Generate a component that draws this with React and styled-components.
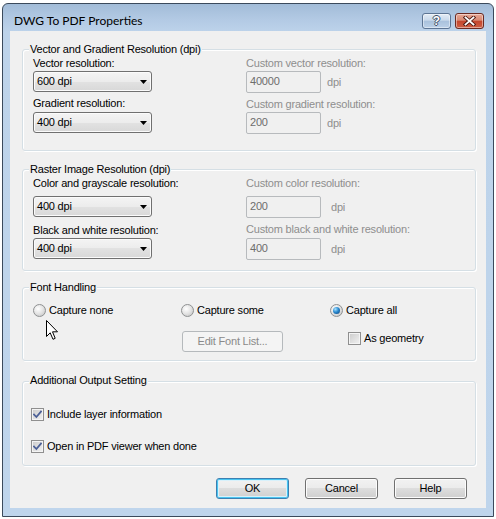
import React from "react";
import styled, { createGlobalStyle } from "styled-components";

const GlobalStyle = createGlobalStyle`
  html, body { margin: 0; padding: 0; background: #ffffff; }
  body {
    font-family: "Liberation Sans", Arial, sans-serif;
    font-size: 11px;
    color: #000;
  }
  #root { width: 496px; height: 519px; }
`;

const Screen = styled.div`
  position: relative;
  width: 496px;
  height: 519px;
  overflow: hidden;
  box-sizing: border-box;
  padding: 3px 2px 2px 2px;
  background: #ffffff;
`;

const Window = styled.div`
  box-sizing: border-box;
  width: 492px;
  height: 514px;
  display: flex;
  flex-direction: column;
  border: 1px solid #3b4a5c;
  border-radius: 6px 6px 0 0;
  padding: 0 7px 8px 7px;
  background: linear-gradient(
    to bottom,
    #a2bcd8 0px,
    #b3cae4 16px,
    #bdd3ea 28px,
    #bfd5ec 100%
  );
`;

const TitleBar = styled.div`
  height: 27px;
  flex: none;
  display: flex;
  align-items: flex-start;
  justify-content: space-between;
  padding: 9px 2px 0 4px;
  box-sizing: border-box;
`;

const Title = styled.div`
  font-family: "Segoe UI", Lato, "Noto Sans", sans-serif;
  font-size: 12px;
  line-height: 15px;
  color: #000;
`;

const CaptionButtons = styled.div`
  display: flex;
  gap: 4px;
`;

const CaptionButton = styled.div`
  width: 29px;
  height: 16px;
  box-sizing: border-box;
  border-radius: 3px;
  display: flex;
  align-items: center;
  justify-content: center;
  border: 1px solid ${(p) => (p.$close ? "#6b2a22" : "#5d7594")};
  background: ${(p) =>
    p.$close
      ? "linear-gradient(to bottom, #e7a795 0%, #d98a74 45%, #c4452c 50%, #cf5f45 100%)"
      : "linear-gradient(to bottom, #e3ecf6 0%, #c9d9eb 45%, #a9c1dc 50%, #bcd1e8 100%)"};
  box-shadow: inset 0 0 0 1px rgba(255, 255, 255, 0.45);
`;

const HelpGlyph = styled.span`
  font-family: "Liberation Sans", Arial, sans-serif;
  font-weight: bold;
  font-size: 12px;
  line-height: 12px;
  color: #ffffff;
  text-shadow: 1px 0 0 #3d4f66, -1px 0 0 #3d4f66, 0 1px 0 #3d4f66,
    0 -1px 0 #3d4f66;
`;

const Client = styled.div`
  flex: 1;
  background: #f0f0f0;
  display: flex;
  flex-direction: column;
  padding: 18px 10px 0 12px;
  box-sizing: border-box;
`;

const Group = styled.section`
  position: relative;
  box-sizing: border-box;
  height: ${(p) => p.$h}px;
  margin-top: ${(p) => p.$mt || 0}px;
  border: 1px solid #d5dfe5;
  border-radius: 3px;
  box-shadow: inset 1px 1px 0 #ffffff, 1px 1px 0 #ffffff;
  padding: ${(p) => p.$pad};
`;

const Legend = styled.h2`
  position: absolute;
  top: ${(p) => (p.$top != null ? p.$top : -7)}px;
  left: 6px;
  margin: 0;
  padding: 0 1px;
  background: #f0f0f0;
  font-size: 11px;
  line-height: 13px;
  font-weight: normal;
  letter-spacing: -0.2px;
  color: #000;
`;

const Columns = styled.div`
  display: flex;
`;

const Column = styled.div`
  display: flex;
  flex-direction: column;
  align-items: flex-start;
  width: ${(p) => (p.$w ? `${p.$w}px` : "auto")};
`;

const Label = styled.div`
  font-size: 11px;
  line-height: 13px;
  letter-spacing: -0.2px;
  white-space: nowrap;
  margin-top: ${(p) => p.$mt || 0}px;
  color: ${(p) => (p.$disabled ? "#8e8e8e" : "#000")};
`;

const Combo = styled.div`
  width: 119px;
  height: 21px;
  box-sizing: border-box;
  margin-top: ${(p) => p.$mt || 0}px;
  border: 1px solid #707070;
  border-radius: 3px;
  padding: 3px 4px 0 3px;
  display: flex;
  justify-content: space-between;
  background: linear-gradient(
    to bottom,
    #f4f4f4 0%,
    #ececec 50%,
    #e2e2e2 50%,
    #d8d8d8 100%
  );
  box-shadow: inset 0 0 0 1px #fbfbfb;
  font-size: 11px;
  line-height: 13px;
  letter-spacing: -0.2px;
`;

const Arrow = styled.svg`
  margin-top: 5px;
  flex: none;
`;

const FieldRow = styled.div`
  display: flex;
  align-items: flex-start;
  margin-top: ${(p) => p.$mt || 0}px;
`;

const TextBox = styled.div`
  width: 75px;
  height: 22px;
  box-sizing: border-box;
  border: 1px solid #b7babd;
  border-radius: 2px;
  background: #f0f0f0;
  padding: 3px 3px 0 3px;
  font-size: 11px;
  line-height: 13px;
  letter-spacing: -0.2px;
  color: #6d6d6d;
`;

const Unit = styled.div`
  margin-left: ${(p) => p.$ml}px;
  margin-top: 5px;
  font-size: 11px;
  line-height: 13px;
  letter-spacing: -0.2px;
  color: #8e8e8e;
`;

const FontGrid = styled.div`
  display: grid;
  grid-template-columns: 148px 149px 1fr;
  row-gap: 14px;
  align-items: start;
`;

const Option = styled.label`
  display: flex;
  align-items: center;
  gap: 3px;
  height: 13px;
  font-size: 11px;
  line-height: 13px;
  letter-spacing: -0.2px;
  white-space: nowrap;
  margin-left: ${(p) => p.$ml || 0}px;
  margin-top: ${(p) => p.$mt || 0}px;
`;

const RadioCircle = styled.span`
  width: 13px;
  height: 13px;
  box-sizing: border-box;
  flex: none;
  border-radius: 50%;
  border: 1px solid #8f9192;
  background: radial-gradient(
    circle at 38% 35%,
    #ffffff 0%,
    #e6e6e6 45%,
    #bfbfbf 100%
  );
  display: flex;
  align-items: center;
  justify-content: center;
`;

const RadioDot = styled.span`
  width: 7px;
  height: 7px;
  border-radius: 50%;
  background: radial-gradient(
    circle at 35% 32%,
    #a8e2ff 0%,
    #2a8ad0 45%,
    #0b3c73 100%
  );
`;

const CheckBox = styled.span`
  width: 13px;
  height: 13px;
  box-sizing: border-box;
  flex: none;
  border: 1px solid #8f8f8f;
  background: linear-gradient(135deg, #cbcbcb 0%, #f2f2f2 100%);
  box-shadow: inset 0 0 0 1px #f4f4f4;
  display: flex;
  align-items: center;
  justify-content: center;
`;

const PushButton = styled.div`
  width: ${(p) => p.$w || 73}px;
  height: 21px;
  box-sizing: border-box;
  border-radius: 3px;
  margin-left: ${(p) => p.$ml || 0}px;
  display: flex;
  align-items: center;
  justify-content: center;
  font-size: 11px;
  line-height: 13px;
  letter-spacing: -0.2px;
  color: ${(p) => (p.$disabled ? "#8a8a8a" : "#000")};
  border: 1px solid
    ${(p) => (p.$disabled ? "#b5b9bc" : p.$default ? "#3c7fb1" : "#707070")};
  background: ${(p) =>
    p.$disabled
      ? "#f4f4f4"
      : "linear-gradient(to bottom, #f2f2f2 0%, #ebebeb 50%, #dddddd 50%, #cfcfcf 100%)"};
  box-shadow: ${(p) =>
    p.$default
      ? "inset 0 0 0 1px #48c4f0, inset 0 0 0 2px #d8f1fb"
      : p.$disabled
      ? "none"
      : "inset 0 0 0 1px #fcfcfc"};
`;

const Stack = styled.div`
  display: flex;
  flex-direction: column;
  gap: 19px;
`;

const ButtonRow = styled.div`
  display: flex;
  justify-content: flex-end;
  gap: 16px;
  margin-top: 12px;
  padding-right: 9px;
`;

const Pointer = styled.svg`
  position: absolute;
  left: 45px;
  top: 319px;
`;

const DownArrow = () => (
  <Arrow width="7" height="4" viewBox="0 0 7 4">
    <path d="M0 0 H7 L3.5 4 Z" fill="#000" />
  </Arrow>
);

const CheckMark = () => (
  <svg width="9" height="9" viewBox="0 0 9 9">
    <path
      d="M1 4.5 L3.4 7 L8 1.5"
      fill="none"
      stroke="#4b5f96"
      strokeWidth="1.8"
      strokeLinecap="square"
    />
  </svg>
);

const CloseGlyph = () => (
  <svg width="13" height="10" viewBox="0 0 13 10">
    <path
      d="M2.5 1.5 L10.5 8.5 M10.5 1.5 L2.5 8.5"
      stroke="#4a1710"
      strokeWidth="3.6"
      strokeLinecap="square"
    />
    <path
      d="M2.5 1.5 L10.5 8.5 M10.5 1.5 L2.5 8.5"
      stroke="#ffffff"
      strokeWidth="1.8"
      strokeLinecap="square"
    />
  </svg>
);

const Radio = ({ checked, children }) => (
  <Option>
    <RadioCircle>{checked && <RadioDot />}</RadioCircle>
    {children}
  </Option>
);

const Check = ({ checked, children, ml, mt }) => (
  <Option $ml={ml} $mt={mt}>
    <CheckBox>{checked && <CheckMark />}</CheckBox>
    {children}
  </Option>
);

export default function App() {
  return (
    <Screen>
      <GlobalStyle />
      <Window>
        <TitleBar>
          <Title>DWG To PDF Properties</Title>
          <CaptionButtons>
            <CaptionButton>
              <HelpGlyph>?</HelpGlyph>
            </CaptionButton>
            <CaptionButton $close>
              <CloseGlyph />
            </CaptionButton>
          </CaptionButtons>
        </TitleBar>
        <Client>
          <Group $h={102} $pad="7px 0 0 10px">
            <Legend>Vector and Gradient Resolution (dpi)</Legend>
            <Columns>
              <Column $w={213}>
                <Label>Vector resolution:</Label>
                <Combo $mt={1}>
                  <span>600 dpi</span>
                  <DownArrow />
                </Combo>
                <Label $mt={5}>Gradient resolution:</Label>
                <Combo $mt={2}>
                  <span>400 dpi</span>
                  <DownArrow />
                </Combo>
              </Column>
              <Column>
                <Label $disabled>Custom vector resolution:</Label>
                <FieldRow $mt={1}>
                  <TextBox>40000</TextBox>
                  <Unit $ml={6}>dpi</Unit>
                </FieldRow>
                <Label $disabled $mt={5}>
                  Custom gradient resolution:
                </Label>
                <FieldRow $mt={1}>
                  <TextBox>200</TextBox>
                  <Unit $ml={6}>dpi</Unit>
                </FieldRow>
              </Column>
            </Columns>
          </Group>

          <Group $h={102} $mt={18} $pad="7px 0 0 10px">
            <Legend>Raster Image Resolution (dpi)</Legend>
            <Columns>
              <Column $w={213}>
                <Label>Color and grayscale resolution:</Label>
                <Combo $mt={6}>
                  <span>400 dpi</span>
                  <DownArrow />
                </Combo>
                <Label $mt={7}>Black and white resolution:</Label>
                <Combo $mt={1}>
                  <span>400 dpi</span>
                  <DownArrow />
                </Combo>
              </Column>
              <Column>
                <Label $disabled>Custom color resolution:</Label>
                <FieldRow $mt={6}>
                  <TextBox>200</TextBox>
                  <Unit $ml={10}>dpi</Unit>
                </FieldRow>
                <Label $disabled $mt={5}>
                  Custom black and white resolution:
                </Label>
                <FieldRow $mt={2}>
                  <TextBox>400</TextBox>
                  <Unit $ml={10}>dpi</Unit>
                </FieldRow>
              </Column>
            </Columns>
          </Group>

          <Group $h={74} $mt={16} $pad="16px 0 0 10px">
            <Legend>Font Handling</Legend>
            <FontGrid>
              <Radio>Capture none</Radio>
              <Radio>Capture some</Radio>
              <Radio checked>Capture all</Radio>
              <span />
              <PushButton $w={101} $ml={1} $disabled>
                Edit Font List...
              </PushButton>
              <Check ml={18} mt={1}>
                As geometry
              </Check>
            </FontGrid>
          </Group>

          <Group $h={85} $mt={20} $pad="26px 0 0 8px">
            <Legend $top={-8}>Additional Output Setting</Legend>
            <Stack>
              <Check checked>Include layer information</Check>
              <Check checked>Open in PDF viewer when done</Check>
            </Stack>
          </Group>

          <ButtonRow>
            <PushButton $default>OK</PushButton>
            <PushButton>Cancel</PushButton>
            <PushButton>Help</PushButton>
          </ButtonRow>
        </Client>
      </Window>
      <Pointer width="13" height="22" viewBox="0 0 13 22">
        <path
          d="M1.5 1.5 L1.5 17.5 L5.2 13.8 L8 20.3 L10.2 19.3 L7.5 12.8 L12.5 12.8 Z"
          fill="#ffffff"
          stroke="#000000"
          strokeWidth="1"
          strokeLinejoin="miter"
        />
      </Pointer>
    </Screen>
  );
}
